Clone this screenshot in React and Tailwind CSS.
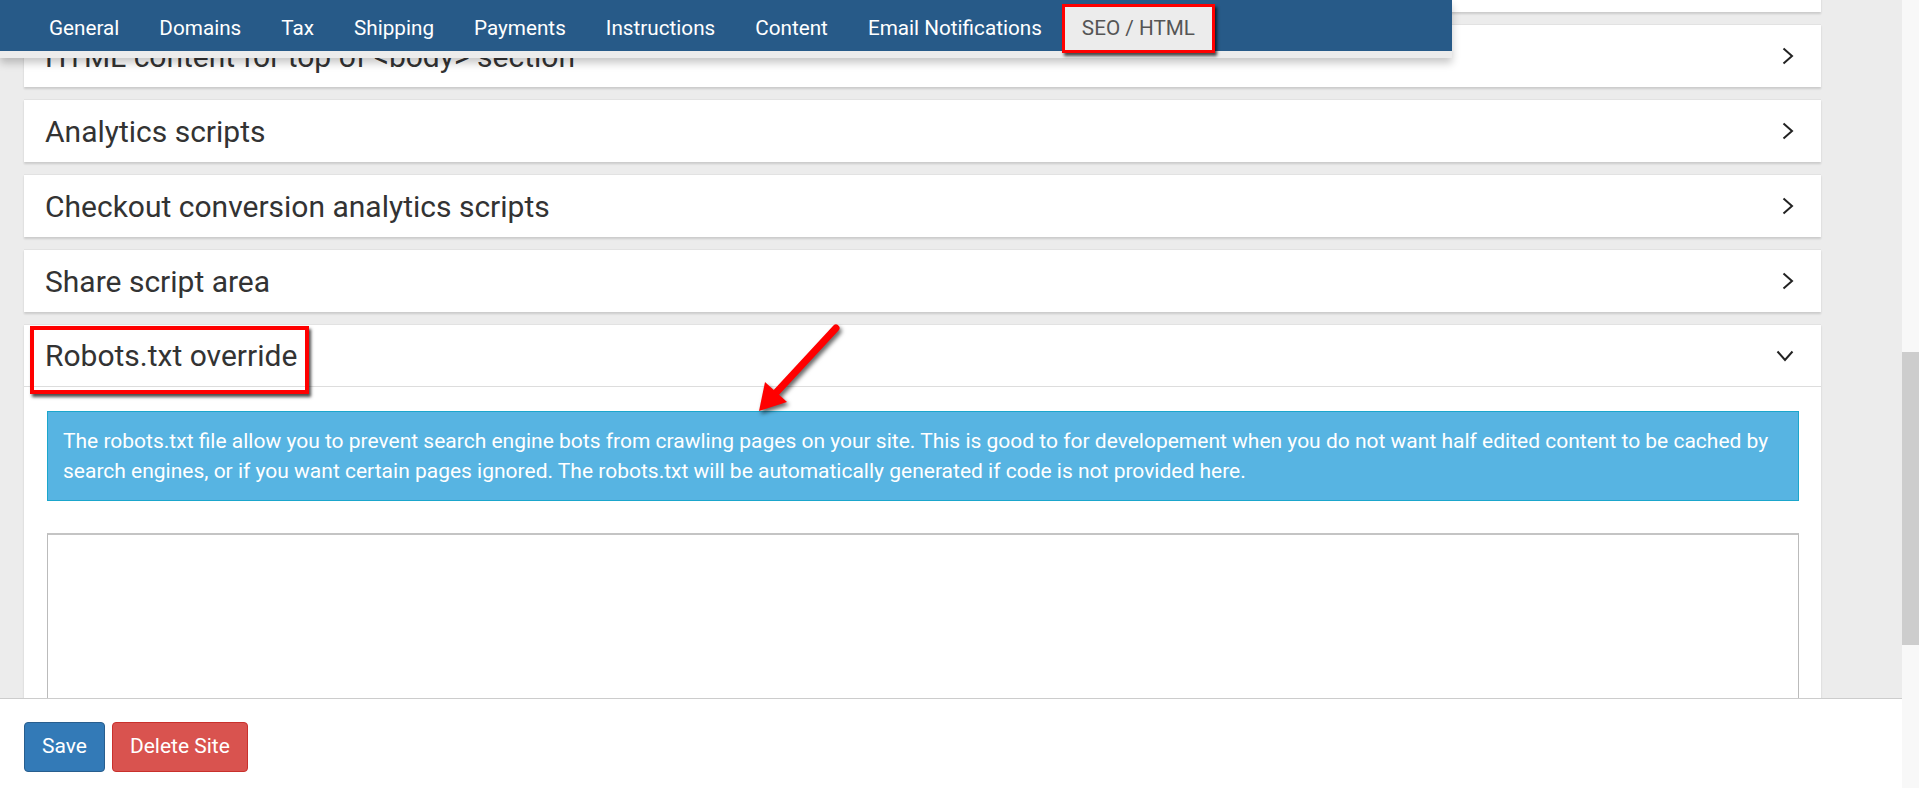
import React from 'react'

const tabs = ['General', 'Domains', 'Tax', 'Shipping', 'Payments', 'Instructions', 'Content', 'Email Notifications']

const ChevronRight = () => (
    <svg width="12" height="18" viewBox="0 0 12 18" fill="none" stroke="#222" strokeWidth="2">
        <polyline points="1.5,1.5 10,9 1.5,16.5" />
    </svg>
)

const ChevronDown = () => (
    <svg width="18" height="12" viewBox="0 0 18 12" fill="none" stroke="#222" strokeWidth="2">
        <polyline points="1.5,1.5 9,10 16.5,1.5" />
    </svg>
)

const Panel = ({ title }) => (
    <div className="bg-white border-t border-[#e2e2e2] shadow-[0_2px_2px_rgba(0,0,0,0.14)]">
        <div className="h-[62px] flex items-center justify-between pl-[21px] pr-[27px] text-[30px] text-[#333]">
            <span>{title}</span>
            <ChevronRight />
        </div>
    </div>
)

export default function App() {
    return (
        <div className="flex h-[788px] w-full overflow-hidden font-['Roboto',sans-serif]">
            <div className="flex flex-1 flex-col min-w-0">
                <main className="relative flex-1 overflow-hidden bg-[#ececec]">
                    <div className="-mt-[51px] ml-6 w-[1797px] flex flex-col gap-3">
                        <Panel title="" />
                        <Panel title="HTML content for top of <body> section" />
                        <Panel title="Analytics scripts" />
                        <Panel title="Checkout conversion analytics scripts" />
                        <Panel title="Share script area" />

                        {/* open panel */}
                        <div className="bg-white border-t border-[#e2e2e2] shadow-[0_2px_2px_rgba(0,0,0,0.14)]">
                            <div className="relative h-[62px] flex items-center justify-between pl-[21px] pr-[27px] text-[30px] text-[#333] border-b border-[#ddd]">
                                <span>Robots.txt override</span>
                                <ChevronDown />
                                <div className="absolute left-[6px] top-[1px] w-[279px] h-[68px] border-[4px] border-[#f00] shadow-[2px_3px_3px_rgba(0,0,0,0.7)]" />
                            </div>
                            <div className="pl-[23px] pr-[22px] pt-[24px]">
                                <div className="border border-[#1ba6cc] bg-[#57b4e2] px-[15px] py-[14px] text-[21px] leading-[30px] text-white">
                                    The robots.txt file allow you to prevent search engine bots from crawling pages on your site. This is good to for developement when you do not want half edited content to be cached by search engines, or if you want certain pages ignored. The robots.txt will be automatically generated if code is not provided here.
                                </div>
                                <textarea className="mt-[32px] block w-full h-[220px] border border-[#bbb] border-t-2 border-t-[#c4c4c4] resize-none outline-none" />
                            </div>
                        </div>
                    </div>

                    {/* tab bar */}
                    <div className="absolute left-0 top-0 w-[1452px] bg-[#ececec] pb-[7px] shadow-[0_5px_8px_rgba(0,0,0,0.22)]">
                        <div className="h-[51px] bg-[#275a88] flex items-start pl-[29px] text-[20.7px] text-white">
                            {tabs.map(t => (
                                <div key={t} className="h-[51px] flex items-center pt-[7px] px-5">{t}</div>
                            ))}
                            <div className="mt-[4px] h-[49px] flex items-center px-[17px] bg-[#ececec] text-[#555] border-[3px] border-[#f00] shadow-[2px_3px_3px_rgba(0,0,0,0.7)]">
                                SEO / HTML
                            </div>
                        </div>
                    </div>

                    {/* annotation arrow */}
                    <svg className="absolute left-[745px] top-[318px] drop-shadow-[2px_3px_2px_rgba(0,0,0,0.6)]" width="105" height="105" viewBox="0 0 105 105">
                        <line x1="91" y1="10" x2="28" y2="78" stroke="#f00" strokeWidth="7" strokeLinecap="round" />
                        <polygon points="14,93 20,64 42,84" fill="#f00" />
                    </svg>
                </main>

                <footer className="h-[90px] shrink-0 border-t border-[#ccc] bg-white pl-6 pt-[23px] flex items-start gap-[7px]">
                    <button className="h-[50px] px-[17px] rounded-[4px] bg-[#337ab7] border border-[#285e8e] text-white text-[21px]">Save</button>
                    <button className="h-[50px] px-[17px] rounded-[4px] bg-[#d9534f] border border-[#c9302c] text-white text-[21px]">Delete Site</button>
                </footer>
            </div>

            {/* scrollbar */}
            <div className="w-[17px] shrink-0 bg-[#f8f8f8]">
                <div className="mt-[352px] h-[293px] bg-[#cdcdcd]" />
            </div>
        </div>
    )
}
